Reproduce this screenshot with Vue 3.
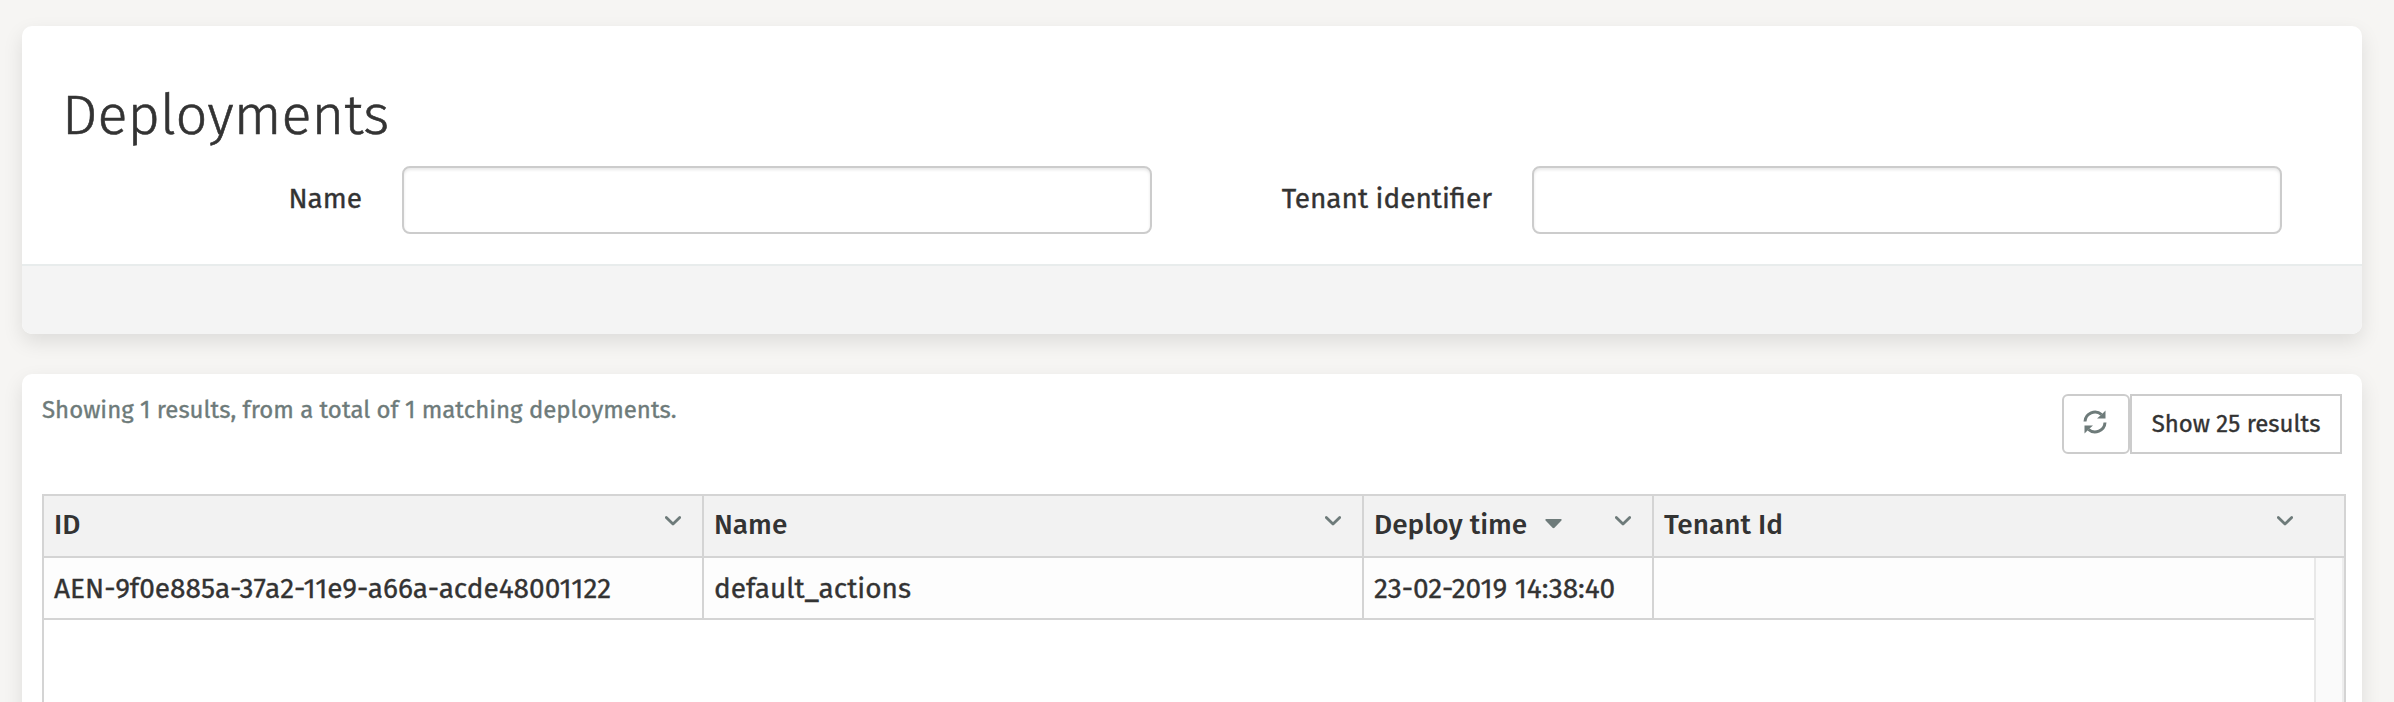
<script setup>
import { ref } from 'vue'

const name = ref('')
const tenantId = ref('')
const total = ref(1)

const columns = [
  { key: 'id', label: 'ID' },
  { key: 'name', label: 'Name' },
  { key: 'time', label: 'Deploy time', sorted: true },
  { key: 'tenant', label: 'Tenant Id' },
]

const deployments = ref([
  {
    id: 'AEN-9f0e885a-37a2-11e9-a66a-acde48001122',
    name: 'default_actions',
    time: '23-02-2019 14:38:40',
    tenant: '',
  },
])
</script>

<template>
  <main class="page">
    <section class="panel search">
      <h2>Deployments</h2>
      <form class="search-form" @submit.prevent>
        <label class="field">
          <span>Name</span>
          <input v-model="name" type="text" />
        </label>
        <label class="field">
          <span>Tenant identifier</span>
          <input v-model="tenantId" type="text" />
        </label>
      </form>
      <div class="panel-footer"></div>
    </section>

    <section class="panel results">
      <div class="toolbar">
        <p>Showing {{ deployments.length }} results, from a total of {{ total }} matching deployments.</p>
        <div class="actions">
          <button class="refresh" type="button" aria-label="Refresh">
            <svg width="24" height="24" viewBox="0 0 24 24">
              <path d="M2 11.5A10 10 0 0 1 18.6 4.6" />
              <path d="M22 12.5A10 10 0 0 1 5.4 19.4" />
              <path class="head" d="M22.5 .5V8.5H14L18 5ZM1.5 23.5V15.5H10L6 19Z" />
            </svg>
          </button>
          <button class="show" type="button">Show 25 results</button>
        </div>
      </div>

      <div class="grid">
        <div class="grid-row grid-header">
          <div v-for="col in columns" :key="col.key" class="cell">
            <span>{{ col.label }}</span>
            <svg v-if="col.sorted" class="sort" width="17" height="10" viewBox="0 0 17 10">
              <path d="M1.2 0H15.8Q17.3 .5 16.2 1.8L9.5 8.7Q8.5 9.6 7.5 8.7L.8 1.8Q-.3 .5 1.2 0Z" />
            </svg>
            <svg class="chevron" width="16" height="10" viewBox="0 0 16 10">
              <path d="M1.3 1.5L8 8L14.7 1.5" />
            </svg>
          </div>
        </div>
        <div class="grid-body">
          <div class="viewport">
            <div v-for="row in deployments" :key="row.id" class="grid-row">
              <div v-for="col in columns" :key="col.key" class="cell">{{ row[col.key] }}</div>
            </div>
          </div>
          <div class="scrollbar"></div>
        </div>
      </div>
    </section>
  </main>
</template>

<style>
body {
  margin: 0;
  overflow: hidden;
}
</style>

<style scoped>
.page {
  box-sizing: border-box;
  height: 702px;
  overflow: hidden;
  padding: 26px 32px 0 22px;
  background: #f6f5f3;
  color: #333333;
  font-family: "Fira Sans", "Noto Sans", sans-serif;
  font-size: 28px;
  -webkit-text-stroke: 0.35px;
}

.panel {
  border-radius: 10px;
  background: #ffffff;
  box-shadow: 0 8px 20px rgba(0, 0, 0, 0.1);
}

.search {
  box-sizing: border-box;
  height: 308px;
  margin-bottom: 40px;
  padding-top: 60px;
}

h2 {
  margin: 0 0 20px 40px;
  font-size: 56px;
  font-weight: 300;
  line-height: 60px;
  -webkit-text-stroke: 0.6px;
}

.search-form {
  display: grid;
  grid-template-columns: 1fr 1fr;
  margin-right: 80px;
}

.field {
  display: flex;
  justify-content: flex-end;
  gap: 40px;
  line-height: 65px;
}

input {
  box-sizing: border-box;
  width: 750px;
  height: 68px;
  border: 2px solid #cccccc;
  border-radius: 8px;
  padding: 0 20px;
  background: #ffffff;
  box-shadow: inset 0 2px 3px rgba(0, 0, 0, 0.09);
  color: #333333;
  font: inherit;
}

.panel-footer {
  height: 68px;
  margin-top: 30px;
  border-top: 2px solid #e8ecec;
  border-radius: 0 0 10px 10px;
  background: #f4f4f4;
}

.results {
  height: 420px;
  padding: 20px 20px 0;
}

.toolbar {
  display: flex;
  justify-content: space-between;
  height: 100px;
}

.toolbar p {
  margin: 0;
  color: #6e7b7a;
  font-size: 24px;
  line-height: 32px;
}

.actions {
  display: flex;
  height: 60px;
}

button {
  box-sizing: border-box;
  border: 2px solid #cccccc;
  background: #ffffff;
  color: #333333;
  font: inherit;
  font-size: 24px;
}

.refresh {
  display: flex;
  align-items: center;
  justify-content: center;
  width: 68px;
  border-radius: 6px;
  padding: 0 2px 4px 0;
}

.refresh path {
  fill: none;
  stroke: #6e7b7a;
  stroke-width: 3;
}

.refresh .head {
  fill: #6e7b7a;
  stroke: none;
}

.show {
  width: 212px;
  padding: 0;
}

.grid {
  height: 300px;
  margin-right: -4px;
  border: 2px solid #d4d4d4;
}

.grid-row {
  display: grid;
  grid-template-columns: 660px 660px 290px 1fr;
  height: 60px;
  border-bottom: 2px solid #d4d4d4;
}

.cell {
  display: flex;
  align-items: center;
  border-right: 2px solid #d4d4d4;
  padding: 1px 10px 0;
  white-space: nowrap;
}

.cell:last-child {
  border-right: 0;
}

.grid-header {
  padding-right: 30px;
  background: #f2f2f2;
  font-weight: 500;
  -webkit-text-stroke: 0;
}

.grid-header .cell {
  padding: 0 21px 3px 10px;
}

.chevron {
  margin-left: auto;
  margin-bottom: 8px;
  fill: none;
  stroke: #6e7b7a;
  stroke-width: 2.8;
  stroke-linecap: round;
  stroke-linejoin: round;
}

.sort {
  margin-left: 18px;
  margin-bottom: 2px;
  fill: #6e7b7a;
}

.grid-body {
  display: flex;
  height: 300px;
}

.viewport {
  flex: 1;
}

.viewport .grid-row {
  background: #fdfdfd;
}

/* the column rules start just under the header line */
.viewport .cell {
  border-image: linear-gradient(#fdfdfd 2px, #d4d4d4 2px) 2;
}

.scrollbar {
  box-sizing: border-box;
  width: 30px;
  border-left: 2px solid #e8e8e8;
  border-right: 2px solid #ededed;
  background: #fafafa;
}
</style>
